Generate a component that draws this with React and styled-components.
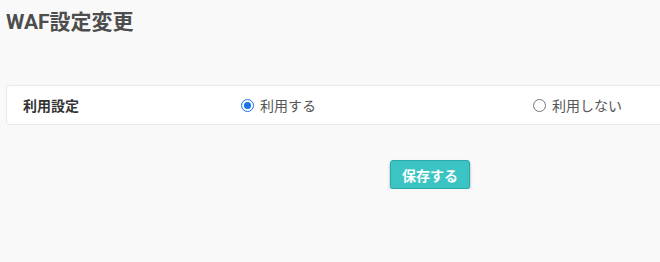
import React, { useState } from "react";
import styled, { createGlobalStyle } from "styled-components";

const GlobalStyle = createGlobalStyle`
  html, body {
    margin: 0;
    padding: 0;
    background: #f9f9f9;
    overflow: hidden;
    font-family: Roboto, "Noto Sans CJK JP", sans-serif;
  }
`;

const Page = styled.div`
  width: 848px;
  padding: 7px 0 0 6px;
`;

const Title = styled.h1`
  margin: 0;
  font-size: 21px;
  font-weight: 700;
  color: #4d4d4d;
  line-height: 30px;
`;

const Card = styled.div`
  margin-top: 48px;
  background: #fff;
  border: 1px solid #e9e9e9;
  border-radius: 3px;
  display: grid;
  grid-template-columns: 218px 292px 1fr;
  align-items: center;
  height: 38px;
  padding: 0 16px;
`;

const Label = styled.div`
  font-size: 14px;
  font-weight: 700;
  color: #333;
`;

const Option = styled.label`
  display: flex;
  align-items: center;
  gap: 6px;
  font-size: 14px;
  color: #555;
  cursor: pointer;
`;

const Radio = styled.span`
  width: 13px;
  height: 13px;
  border-radius: 50%;
  box-sizing: border-box;
  border: 1px solid ${(p) => (p.checked ? "#1a73e8" : "#767676")};
  display: flex;
  align-items: center;
  justify-content: center;
  &::after {
    content: "";
    width: 7px;
    height: 7px;
    border-radius: 50%;
    background: ${(p) => (p.checked ? "#1a73e8" : "transparent")};
  }
`;

const Actions = styled.div`
  display: flex;
  justify-content: center;
  margin-top: 35px;
`;

const SaveButton = styled.button`
  width: 80px;
  height: 29px;
  border: 1px solid #2aa9a9;
  border-radius: 3px;
  background: #3cc4c4;
  color: #fff;
  font-family: inherit;
  font-size: 14px;
  font-weight: 700;
  box-shadow: 0 2px 3px rgba(0, 0, 0, 0.3);
  cursor: pointer;
`;

export default function App() {
  const [use, setUse] = useState(true);
  return (
    <>
      <GlobalStyle />
      <Page>
        <Title>WAF設定変更</Title>
        <Card>
          <Label>利用設定</Label>
          <Option onClick={() => setUse(true)}>
            <Radio checked={use} />
            利用する
          </Option>
          <Option onClick={() => setUse(false)}>
            <Radio checked={!use} />
            利用しない
          </Option>
        </Card>
        <Actions>
          <SaveButton>保存する</SaveButton>
        </Actions>
      </Page>
    </>
  );
}
